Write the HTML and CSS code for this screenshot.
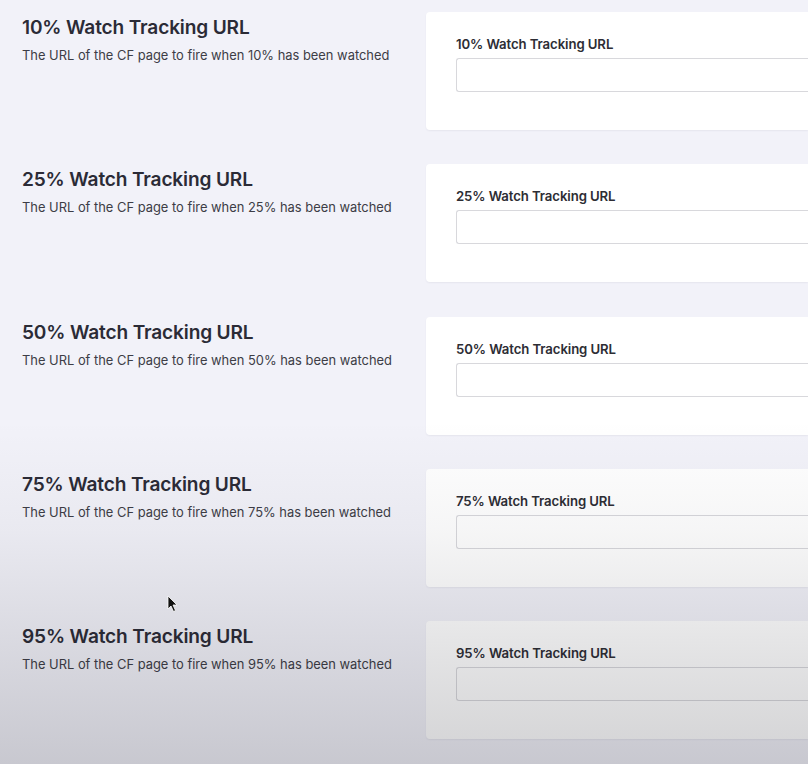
FILE: index.html
```html
<!DOCTYPE html>
<html lang="en">
<head>
<meta charset="utf-8">
<title>Watch Tracking URLs</title>
<link rel="stylesheet" href="styles.css">
</head>
<body>
<main class="settings">
  <section class="row">
    <div class="info">
      <h2 class="title">10% Watch Tracking URL</h2>
      <p class="desc">The URL of the CF page to fire when 10% has been watched</p>
    </div>
    <div class="card">
      <label class="label">10% Watch Tracking URL</label>
      <input class="field" type="text">
    </div>
  </section>
  <section class="row">
    <div class="info">
      <h2 class="title">25% Watch Tracking URL</h2>
      <p class="desc">The URL of the CF page to fire when 25% has been watched</p>
    </div>
    <div class="card">
      <label class="label">25% Watch Tracking URL</label>
      <input class="field" type="text">
    </div>
  </section>
  <section class="row">
    <div class="info">
      <h2 class="title">50% Watch Tracking URL</h2>
      <p class="desc">The URL of the CF page to fire when 50% has been watched</p>
    </div>
    <div class="card">
      <label class="label">50% Watch Tracking URL</label>
      <input class="field" type="text">
    </div>
  </section>
  <section class="row">
    <div class="info">
      <h2 class="title">75% Watch Tracking URL</h2>
      <p class="desc">The URL of the CF page to fire when 75% has been watched</p>
    </div>
    <div class="card">
      <label class="label">75% Watch Tracking URL</label>
      <input class="field" type="text">
    </div>
  </section>
  <section class="row">
    <div class="info">
      <h2 class="title">95% Watch Tracking URL</h2>
      <p class="desc">The URL of the CF page to fire when 95% has been watched</p>
    </div>
    <div class="card">
      <label class="label">95% Watch Tracking URL</label>
      <input class="field" type="text">
    </div>
  </section>
</main>
<div class="shade"></div>
<svg class="cursor" width="12" height="18" viewBox="0 0 12 18"><path d="M1 1 L1 14 L4 11 L6.5 16.5 L8.5 15.5 L6 10 L10 10 Z" fill="#111" stroke="#fff" stroke-width="0.8" stroke-linejoin="round"/></svg>
</body>
</html>
```

FILE: styles.css
```css
html, body {
  margin: 0;
  padding: 0;
}
body {
  width: 808px;
  height: 764px;
  overflow: hidden;
  background: #f2f2f9;
  font-family: Inter, "Noto Sans", sans-serif;
  position: relative;
}
.settings {
  display: flex;
  flex-direction: column;
  gap: 34.25px;
  padding-top: 12px;
}
.row {
  display: flex;
  height: 118px;
}
.info {
  width: 404px;
  flex: none;
  padding-left: 22px;
  padding-top: 4px;
}
.title {
  margin: 0;
  font-size: 19.1px;
  line-height: 22px;
  font-weight: 600;
  color: #2b2b36;
  letter-spacing: -0.15px;
}
.desc {
  margin: 10px 0 0;
  font-size: 12.9px;
  line-height: 16px;
  color: #3d3d46;
}
.card {
  flex: 1;
  min-width: 0;
  background: #fff;
  border-radius: 4px 0 0 4px;
  box-shadow: 0 1px 2px rgba(40, 40, 60, 0.06);
  padding: 24px 0 0 30px;
  display: flex;
  flex-direction: column;
}
.label {
  font-size: 13.2px;
  line-height: 16px;
  font-weight: 600;
  color: #2d2d34;
  letter-spacing: -0.1px;
}
.field {
  margin: 6px 0 0;
  height: 34px;
  box-sizing: border-box;
  width: 100%;
  border: 1px solid #d8d8dc;
  border-right: none;
  border-radius: 3px 0 0 3px;
  background: #fff;
  padding: 0;
}
.shade {
  position: absolute;
  inset: 0;
  pointer-events: none;
  background: linear-gradient(to bottom, rgba(0,0,0,0) 0, rgba(0,0,0,0) 420px, rgba(20,20,30,0.04) 530px, rgba(20,20,30,0.11) 640px, rgba(20,20,30,0.19) 764px);
}
.cursor {
  position: absolute;
  left: 167px;
  top: 595px;
}
```
